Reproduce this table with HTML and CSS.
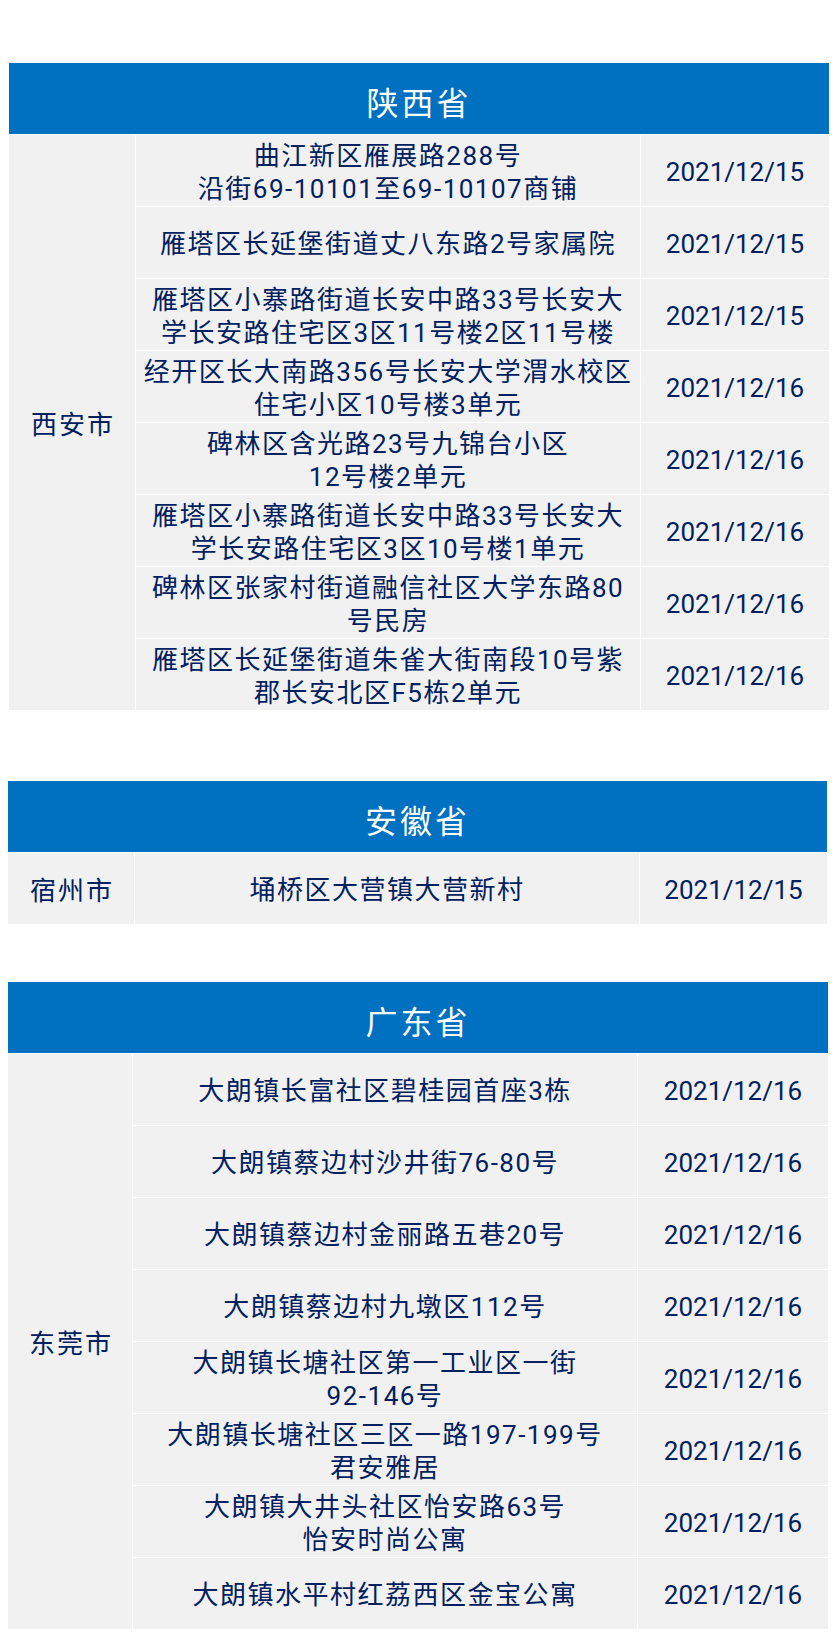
FILE: index.html
```html
<!DOCTYPE html>
<html lang="zh-CN">
<head>
<meta charset="utf-8">
<title>风险地区</title>
<link rel="stylesheet" href="styles.css">
</head>
<body>
<main class="page">
  <section class="sheet sheet-first">
    <div class="province">陕西省</div>
    <div class="city city-8">西安市</div>
    <div class="addr">曲江新区雁展路288号<br>沿街69-10101至69-10107商铺</div><div class="date">2021/12/15</div>
    <div class="addr">雁塔区长延堡街道丈八东路2号家属院</div><div class="date">2021/12/15</div>
    <div class="addr">雁塔区小寨路街道长安中路33号长安大<br>学长安路住宅区3区11号楼2区11号楼</div><div class="date">2021/12/15</div>
    <div class="addr">经开区长大南路356号长安大学渭水校区<br>住宅小区10号楼3单元</div><div class="date">2021/12/16</div>
    <div class="addr">碑林区含光路23号九锦台小区<br>12号楼2单元</div><div class="date">2021/12/16</div>
    <div class="addr">雁塔区小寨路街道长安中路33号长安大<br>学长安路住宅区3区10号楼1单元</div><div class="date">2021/12/16</div>
    <div class="addr">碑林区张家村街道融信社区大学东路80<br>号民房</div><div class="date">2021/12/16</div>
    <div class="addr">雁塔区长延堡街道朱雀大街南段10号紫<br>郡长安北区F5栋2单元</div><div class="date">2021/12/16</div>
  </section>

  <section class="sheet sheet-second">
    <div class="province">安徽省</div>
    <div class="city">宿州市</div>
    <div class="addr">埇桥区大营镇大营新村</div><div class="date">2021/12/15</div>
  </section>

  <section class="sheet sheet-third">
    <div class="province">广东省</div>
    <div class="city city-8">东莞市</div>
    <div class="addr">大朗镇长富社区碧桂园首座3栋</div><div class="date">2021/12/16</div>
    <div class="addr">大朗镇蔡边村沙井街76-80号</div><div class="date">2021/12/16</div>
    <div class="addr">大朗镇蔡边村金丽路五巷20号</div><div class="date">2021/12/16</div>
    <div class="addr">大朗镇蔡边村九墩区112号</div><div class="date">2021/12/16</div>
    <div class="addr">大朗镇长塘社区第一工业区一街<br>92-146号</div><div class="date">2021/12/16</div>
    <div class="addr">大朗镇长塘社区三区一路197-199号<br>君安雅居</div><div class="date">2021/12/16</div>
    <div class="addr">大朗镇大井头社区怡安路63号<br>怡安时尚公寓</div><div class="date">2021/12/16</div>
    <div class="addr">大朗镇水平村红荔西区金宝公寓</div><div class="date">2021/12/16</div>
  </section>
</main>
</body>
</html>
```

FILE: styles.css
```css
html, body {
  margin: 0;
  padding: 0;
  background: #ffffff;
}

.page {
  padding-top: 63px;
  padding-bottom: 16px;
  font-family: Roboto, "Noto Sans CJK SC", sans-serif;
  color: #002060;
}

.sheet {
  display: grid;
  grid-template-columns: 126px 504px 1fr;
  grid-auto-rows: 71px;
  gap: 1px;
  width: 820px;
  margin-left: 8px;
  background: #ffffff;
}

.sheet-first {
  margin-left: 9px;
}

.sheet-second {
  margin-top: 71px;
  width: 819px;
}

.sheet-third {
  margin-top: 58px;
  grid-template-columns: 124px 504px 1fr;
}

.province {
  grid-column: 1 / -1;
  background: #0070c0;
  color: #ffffff;
  font-family: "Noto Sans CJK SC", sans-serif;
  font-size: 32px;
  letter-spacing: 3px;
  display: flex;
  align-items: center;
  justify-content: center;
  padding-top: 4px;
  box-sizing: border-box;
}

.city,
.addr,
.date {
  background: #f1f1f1;
  display: flex;
  align-items: center;
  justify-content: center;
  text-align: center;
  white-space: nowrap;
  font-size: 26px;
  line-height: 33px;
  padding-top: 4px;
  box-sizing: border-box;
}

.city {
  grid-column: 1;
  letter-spacing: 2px;
  padding-left: 2px;
  padding-top: 6px;
}

.city-8 {
  grid-row: span 8;
}

.addr {
  grid-column: 2;
  letter-spacing: 1.5px;
}

.date {
  grid-column: 3;
  letter-spacing: 0;
}
```
